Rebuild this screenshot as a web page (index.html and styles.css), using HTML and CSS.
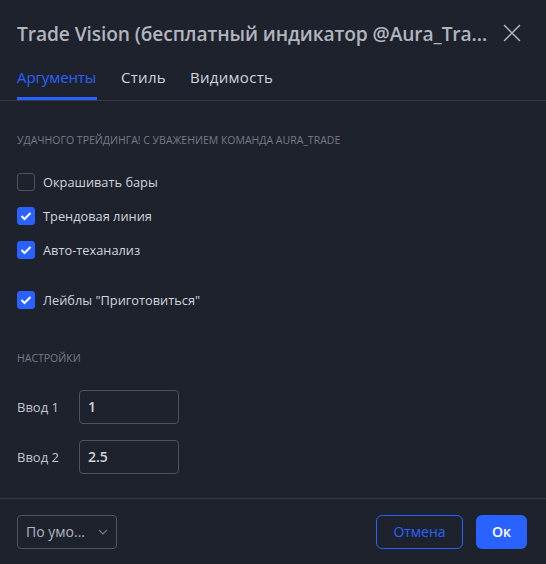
FILE: index.html
```html
<!DOCTYPE html>
<html lang="ru">
<head>
<meta charset="utf-8">
<link rel="stylesheet" href="styles.css">
</head>
<body>
<div class="dialog">
  <div class="header">
    <div class="title">Trade Vision (бесплатный индикатор @Aura_Tra...</div>
    <svg class="close" width="18" height="18" viewBox="0 0 18 18"><path d="M1 1L17 17M17 1L1 17" stroke="#b2b5be" stroke-width="1.5" fill="none"/></svg>
  </div>
  <div class="tabs">
    <div class="tab active">Аргументы</div>
    <div class="tab">Стиль</div>
    <div class="tab">Видимость</div>
  </div>
  <div class="content">
    <div class="section">УДАЧНОГО ТРЕЙДИНГА! С УВАЖЕНИЕМ КОМАНДА AURA_TRADE</div>
    <div class="checks">
      <label class="check"><span class="box"></span><span>Окрашивать бары</span></label>
      <label class="check"><span class="box on"><svg width="12" height="10" viewBox="0 0 12 10"><path d="M1.5 5L4.5 8L10.5 2" stroke="#fff" stroke-width="2" fill="none"/></svg></span><span>Трендовая линия</span></label>
      <label class="check"><span class="box on"><svg width="12" height="10" viewBox="0 0 12 10"><path d="M1.5 5L4.5 8L10.5 2" stroke="#fff" stroke-width="2" fill="none"/></svg></span><span>Авто-теханализ</span></label>
      <label class="check gap"><span class="box on"><svg width="12" height="10" viewBox="0 0 12 10"><path d="M1.5 5L4.5 8L10.5 2" stroke="#fff" stroke-width="2" fill="none"/></svg></span><span>Лейблы "Приготовиться"</span></label>
    </div>
    <div class="section s2">НАСТРОЙКИ</div>
    <div class="inputs">
      <div class="row"><span class="lbl">Ввод 1</span><div class="field">1</div></div>
      <div class="row"><span class="lbl">Ввод 2</span><div class="field">2.5</div></div>
    </div>
  </div>
  <div class="footer">
    <div class="select">По умо...<svg width="10" height="6" viewBox="0 0 10 6"><path d="M1 1L5 5L9 1" stroke="#787b86" stroke-width="1.2" fill="none"/></svg></div>
    <div class="spacer"></div>
    <div class="btn cancel">Отмена</div>
    <div class="btn ok">Ок</div>
  </div>
</div>
</body>
</html>
```
FILE: styles.css
```css
html, body { margin: 0; padding: 0; background: #1e222d; }
body { font-family: "Open Sans", "Noto Sans", sans-serif; color: #d1d4dc; }
.dialog { width: 546px; height: 564px; display: flex; flex-direction: column; box-sizing: border-box; }
.header { display: flex; align-items: center; height: 66px; padding: 0 25px 0 17px; box-sizing: border-box; }
.title { flex: 1; font-size: 19.2px; font-weight: 600; color: #b2b5be; white-space: nowrap; letter-spacing: -0.1px; }
.close { display: block; }
.tabs { display: flex; gap: 24px; padding: 0 17px; height: 34px; border-bottom: 1px solid #363a45; }
.tab { font-size: 15px; color: #d1d4dc; height: 34px; box-sizing: border-box; line-height: 22px; font-weight: 500; letter-spacing: 0.3px; }
.tab.active { color: #2962ff; border-bottom: 3px solid #2962ff; font-weight: 400; letter-spacing: -0.1px; width: 80px; }
.content { flex: 1; padding: 0 17px; }
.section { font-size: 10.5px; color: #787b86; margin-top: 31px; height: 16px; line-height: 16px; }
.s2 { margin-top: 33px; }
.checks { display: flex; flex-direction: column; margin-top: 17px; }
.check { display: flex; align-items: center; gap: 8px; height: 34px; font-size: 12.8px; }
.check.gap { margin-top: 16px; }
.box { width: 18px; height: 18px; box-sizing: border-box; border: 1px solid #50535e; border-radius: 3px; display: flex; align-items: center; justify-content: center; }
.box.on { background: #2962ff; border-color: #2962ff; }
.inputs { display: flex; flex-direction: column; gap: 16px; margin-top: 24px; }
.row { display: flex; align-items: center; height: 34px; }
.lbl { width: 62px; font-size: 13px; font-weight: 500; color: #c3c6ce; }
.field { width: 100px; height: 34px; box-sizing: border-box; border: 1px solid #50535e; border-radius: 4px; font-size: 14px; font-weight: 600; padding: 0 8px; line-height: 32px; }
.footer { height: 66px; border-top: 1px solid #363a45; display: flex; align-items: center; padding: 0 19px 0 17px; gap: 13px; box-sizing: border-box; }
.spacer { flex: 1; }
.select { width: 100px; height: 34px; box-sizing: border-box; border: 1px solid #50535e; border-radius: 4px; display: flex; align-items: center; justify-content: space-between; padding: 0 8px; font-size: 14px; color: #b2b5be; }
.btn { height: 34px; box-sizing: border-box; border-radius: 6px; display: flex; align-items: center; justify-content: center; font-size: 14px; }
.cancel { width: 87px; border: 1px solid #2962ff; color: #2962ff; }
.ok { width: 51px; background: #2962ff; color: #fff; font-weight: 600; }
```
